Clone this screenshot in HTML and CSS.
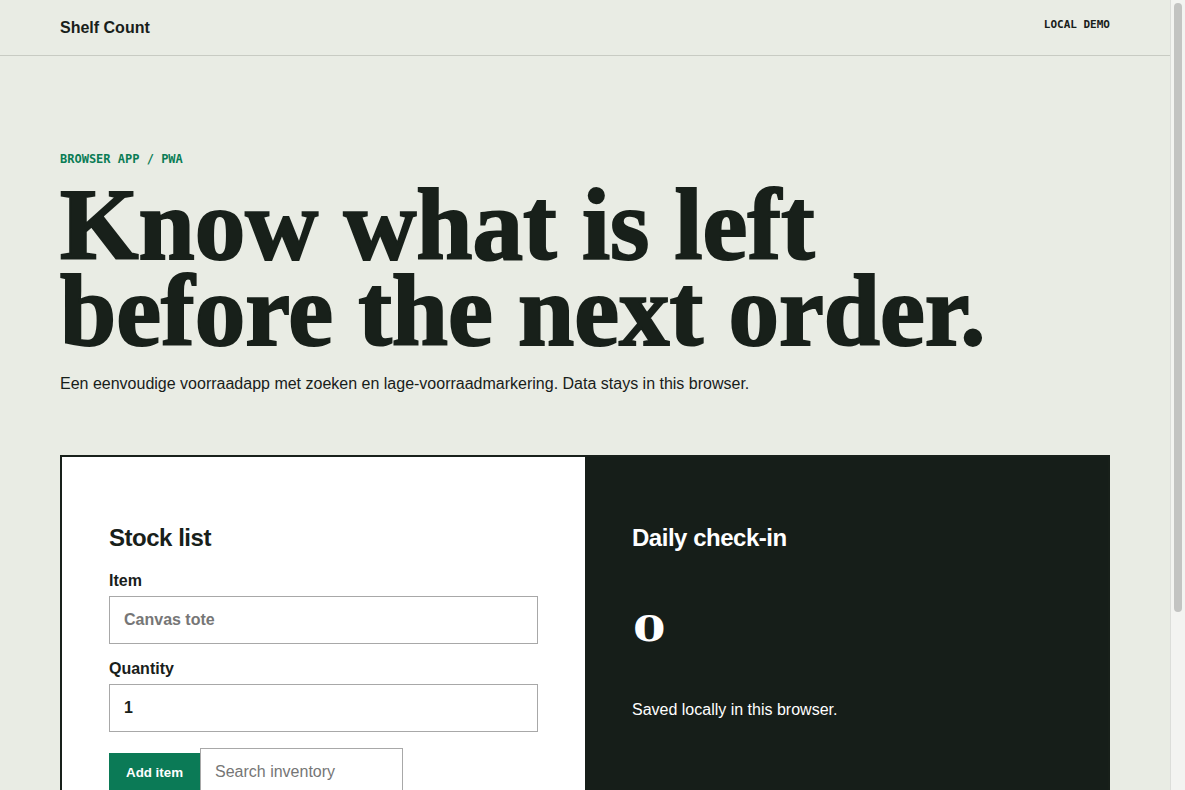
FILE: index.html
```html
<!DOCTYPE html>
<html lang="en">
<head>
<meta charset="utf-8">
<title>Shelf Count</title>
<link rel="stylesheet" href="styles.css">
</head>
<body>
<header class="topbar">
  <div class="brand">Shelf Count</div>
  <div class="tag">LOCAL DEMO</div>
</header>
<main class="page">
  <section class="hero">
    <p class="eyebrow">BROWSER APP / PWA</p>
    <h1 class="title">Know what is left before the next order.</h1>
    <p class="lede">Een eenvoudige voorraadapp met zoeken en lage-voorraadmarkering. Data stays in this browser.</p>
  </section>
  <section class="board">
    <div class="panel panel-light">
      <h2 class="panel-title">Stock list</h2>
      <form class="stock-form">
        <label class="field">
          <span class="field-label">Item</span>
          <input class="field-input" type="text" placeholder="Canvas tote">
        </label>
        <label class="field">
          <span class="field-label">Quantity</span>
          <input class="field-input" type="text" value="1">
        </label>
        <div class="actions">
          <button class="btn" type="button">Add item</button>
          <input class="search" type="search" placeholder="Search inventory">
        </div>
      </form>
      <ul class="items"></ul>
    </div>
    <div class="panel panel-dark">
      <h2 class="panel-title">Daily check-in</h2>
      <p class="count"><span class="count-num">0</span></p>
      <p class="note">Saved locally in this browser.</p>
    </div>
  </section>
</main>
<div class="scrollbar" aria-hidden="true"><div class="scrollbar-thumb"></div></div>
</body>
</html>
```

FILE: styles.css
```css
html, body {
  margin: 0;
  padding: 0;
}
html {
  background: #e9ece4;
}
body {
  margin-right: 15px;
  background: #e9ece4;
  color: #18201a;
  font-family: "Liberation Sans", Arial, sans-serif;
  font-size: 16px;
}
.scrollbar {
  position: fixed;
  top: 0;
  right: 0;
  width: 15px;
  height: 100vh;
  box-sizing: border-box;
  background: #f3f4f1;
  border-left: 1px solid #dcdeda;
}
.scrollbar-thumb {
  margin: 3px 0 0 3px;
  width: 8px;
  height: 609px;
  border-radius: 4px;
  background: #c3c4c2;
}
.topbar {
  height: 55px;
  border-bottom: 1px solid #c8cbc3;
  padding: 0 60px;
  display: flex;
  align-items: center;
  justify-content: space-between;
}
.brand {
  font-weight: 700;
  font-size: 16px;
}
.tag {
  font-family: "DejaVu Sans Mono", "Liberation Mono", monospace;
  font-weight: 700;
  font-size: 11px;
  margin-bottom: 6px;
}
.page {
  padding: 96px 60px 135px;
}
.eyebrow {
  margin: 0;
  font-family: "DejaVu Sans Mono", "Liberation Mono", monospace;
  font-weight: 700;
  font-size: 12px;
  color: #0a7c55;
}
.title {
  margin: 16px 0 0;
  max-width: 960px;
  font-family: "Liberation Serif", "Times New Roman", serif;
  font-weight: 700;
  font-size: 101px;
  line-height: 86px;
  letter-spacing: 0;
  -webkit-text-stroke: 2px #18201a;
  color: #18201a;
}
.lede {
  margin: 18px 0 0;
  line-height: 24px;
}
.board {
  margin-top: 59px;
  border: 2px solid #18201a;
  background: #161e19;
  display: grid;
  grid-template-columns: 1fr 1fr;
}
.panel {
  padding: 48px 47px;
}
.panel-light {
  background: #ffffff;
}
.panel-dark {
  background: #161e19;
  color: #ffffff;
}
.panel-title {
  margin: 19px 0 20px;
  font-size: 24px;
  font-weight: 700;
  letter-spacing: -0.02em;
}
.stock-form {
  display: flex;
  flex-direction: column;
}
.field {
  display: flex;
  flex-direction: column;
  font-weight: 700;
}
.field + .field {
  margin-top: 16px;
}
.field-label {
  margin-bottom: 6px;
}
.field-input {
  box-sizing: border-box;
  height: 48px;
  padding: 0 14px;
  border: 1px solid #a8a8a8;
  border-radius: 0;
  font-family: "Liberation Sans", Arial, sans-serif;
  font-size: 16px;
  font-weight: 700;
  color: #18201a;
  background: #fff;
}
.field-input::placeholder {
  color: #767676;
}
.actions {
  margin-top: 16px;
  display: flex;
  align-items: center;
}
.btn {
  box-sizing: border-box;
  height: 39px;
  padding: 0 17px;
  border: 0;
  border-radius: 0;
  background: #0b7a56;
  color: #ffffff;
  font-family: "Liberation Sans", Arial, sans-serif;
  font-size: 13.333px;
  font-weight: 700;
}
.search {
  box-sizing: border-box;
  width: 203px;
  height: 48px;
  padding: 0 14px;
  border: 1px solid #a8a8a8;
  border-radius: 0;
  font-family: "Liberation Sans", Arial, sans-serif;
  font-size: 16px;
  color: #18201a;
  background: #fff;
  -webkit-appearance: none;
  appearance: none;
}
.search::placeholder {
  color: #767676;
}
.items {
  margin: 24px 0 0;
  padding: 0;
  list-style: none;
  min-height: 24px;
}
.count {
  margin: 58px 0 0;
  font-family: "DejaVu Serif", "Liberation Serif", serif;
  font-weight: 700;
  font-size: 36px;
  line-height: 36px;
}
.count-num {
  display: inline-block;
  transform: scaleX(1.3);
  transform-origin: left center;
  margin-left: 1px;
}
.note {
  margin: 55px 0 0;
  line-height: 18px;
}
```
